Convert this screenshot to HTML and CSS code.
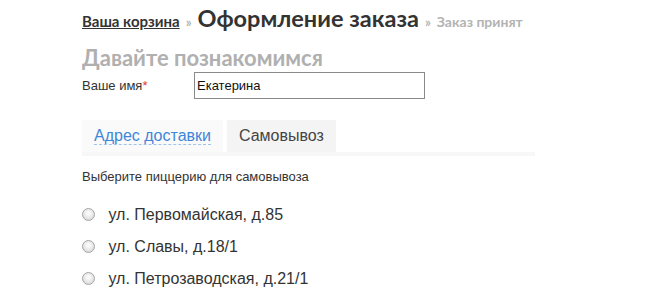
FILE: index.html
```html
<!DOCTYPE html>
<html lang="ru">
<head>
    <meta charset="UTF-8">
    <title>Оформление заказа</title>
    <link rel="stylesheet" href="styles.css">
</head>
<body>
    <div class="checkout">
        <div class="steps">
            <a href="#" class="step-link">Ваша корзина</a>
            <span class="sep">»</span>
            <h1 class="step-current">Оформление заказа</h1>
            <span class="sep">»</span>
            <span class="step-next">Заказ принят</span>
        </div>

        <h2 class="section-title">Давайте познакомимся</h2>

        <div class="field">
            <label for="name" class="field-label">Ваше имя<span class="required">*</span></label>
            <input type="text" id="name" class="field-input" value="Екатерина">
        </div>

        <div class="tabs">
            <div class="tab"><a href="#" class="tab-link">Адрес доставки</a></div>
            <div class="tab tab-active">Самовывоз</div>
        </div>

        <p class="hint">Выберите пиццерию для самовывоза</p>

        <ul class="shops">
            <li><label><input type="radio" name="shop" class="radio"> ул. Первомайская, д.85</label></li>
            <li><label><input type="radio" name="shop" class="radio"> ул. Славы, д.18/1</label></li>
            <li><label><input type="radio" name="shop" class="radio"> ул. Петрозаводская, д.21/1</label></li>
        </ul>
    </div>
</body>
</html>
```

FILE: styles.css
```css
body {
    margin: 0;
    font-family: "Liberation Sans", Arial, sans-serif;
    color: #333;
    background: #fff;
}
.checkout {
    width: 453px;
    padding: 4px 0 0 82px;
    white-space: nowrap;
}
.steps {
    display: flex;
    align-items: baseline;
    font-family: Lato, "Open Sans", sans-serif;
    font-weight: bold;
    height: 33px;
}
.step-link {
    color: #333;
    font-size: 15px;
    text-decoration: underline;
}
.sep {
    color: #b3b3b3;
    font-size: 13px;
    margin: 0 6px;
}
.step-current {
    margin: 0;
    font-size: 23.5px;
    color: #333;
}
.step-next {
    color: #b3b3b3;
    font-size: 14px;
}
.section-title {
    margin: 0;
    padding-top: 7px;
    font-family: Lato, "Open Sans", sans-serif;
    font-size: 22px;
    color: #b0b0b0;
    line-height: 27px;
}
.field {
    display: flex;
    align-items: center;
    height: 28px;
}
.field-label {
    width: 112px;
    font-size: 13px;
}
.required {
    color: #e5343d;
}
.field-input {
    width: 225px;
    height: 21px;
    border: 1px solid #8a8a8a;
    padding: 2px 2px;
    font-family: "Liberation Sans", Arial, sans-serif;
    font-size: 13px;
    color: #111;
    outline: none;
}
.tabs {
    display: flex;
    gap: 4px;
    margin-top: 21px;
    border-bottom: 4px solid #f7f7f7;
}
.tab {
    height: 32px;
    line-height: 32px;
    padding: 0 12px;
    font-size: 16px;
    background: #fafafa;
}
.tab-link {
    color: #3f86d8;
    text-decoration: none;
    border-bottom: 1px dashed #9fc2ec;
}
.tab-active {
    background: #f4f4f4;
    color: #444;
}
.hint {
    margin: 13px 0 0;
    font-size: 13px;
}
.shops {
    list-style: none;
    margin: 15px 0 0;
    padding: 0;
}
.shops li {
    height: 32px;
    line-height: 32px;
    font-size: 16px;
}
.radio {
    appearance: none;
    width: 13px;
    height: 13px;
    margin: 0 9px 0 0;
    border: 1px solid #a5a5a5;
    border-radius: 50%;
    background: radial-gradient(circle at 50% 40%, #fff 0%, #e9e9e9 50%, #cfcfcf 100%);
    vertical-align: -1px;
}
```
